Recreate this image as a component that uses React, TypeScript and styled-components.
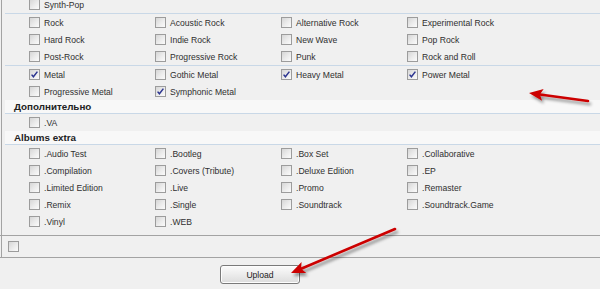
import React from "react";
import styled, { createGlobalStyle } from "styled-components";

const GlobalStyle = createGlobalStyle`
  html, body {
    margin: 0;
    padding: 0;
    background: #f0f0f0;
  }
  body {
    font-family: "Liberation Sans", Arial, sans-serif;
    color: #333;
  }
`;

const Page = styled.div`
  position: relative;
  width: 600px;
  height: 289px;
  overflow: hidden;
  background: #f0f0f0;
`;

const Frame = styled.div`
  margin-left: 1px;
  border-left: 1px solid #a3a3a3;
`;

const Inner = styled.div`
  padding-left: 3px;
`;

const Group = styled.div<{ $first?: boolean; $line?: boolean }>`
  margin-top: ${(p) => (p.$first ? "-4px" : "0")};
  border-bottom: ${(p) => (p.$line ? "1px solid #c9d8e7" : "none")};
`;

const Row = styled.div`
  height: 17px;
  display: grid;
  grid-template-columns: repeat(4, 126px);
  padding-left: 24px;
`;

const Item = styled.label`
  display: flex;
  align-items: center;
  gap: 4px;
  white-space: nowrap;
  font-size: 8.6px;
  color: #2f2f2f;
  padding-top: 1px;
`;

const Box = styled.span`
  flex: none;
  width: 9px;
  height: 9px;
  margin-top: -1px;
  border: 1px solid #9c9c9c;
  background: linear-gradient(135deg, #d6d6d6 0%, #ececec 55%, #fbfbfb 100%);
  display: flex;
  align-items: center;
  justify-content: center;
  svg {
    display: block;
  }
`;

const Header = styled.div`
  height: 13px;
  line-height: 14px;
  padding-left: 9px;
  background: #f8f8f8;
  border-bottom: 1px solid #c9d8e7;
  font-size: 9.8px;
  font-weight: bold;
  color: #222;
`;

const AlbumGroup = styled.div`
  padding-bottom: 5px;
`;

const BottomRow = styled.div`
  height: 21px;
  display: flex;
  align-items: center;
  padding-left: 8px;
  border-top: 1px solid #a3a3a3;
  border-bottom: 1px solid #a3a3a3;
  margin-left: -2px;
`;

const Actions = styled.div`
  display: flex;
  padding: 7px 0 0 220px;
`;

const Button = styled.button`
  width: 80px;
  height: 19px;
  padding: 0;
  border: 1px solid #7a7a7a;
  border-radius: 3px;
  background: linear-gradient(#fbfbfb 0%, #ececec 50%, #dcdcdc 100%);
  box-shadow: inset 0 0 0 1px #fdfdfd;
  font-family: "Liberation Sans", Arial, sans-serif;
  font-size: 8.6px;
  color: #222;
`;

const Overlay = styled.svg`
  position: absolute;
  left: 0;
  top: 0;
  pointer-events: none;
`;

function Check({ on }: { on?: boolean }) {
  return (
    <Box>
      {on && (
        <svg width="9" height="9" viewBox="0 0 9 9">
          <polyline
            points="1.6,4.6 3.4,6.8 7.4,1.6"
            fill="none"
            stroke="#2c3590"
            strokeWidth="1.5"
          />
        </svg>
      )}
    </Box>
  );
}

type Opt = [string, boolean?];

const genreGroups: Opt[][][] = [
  [[["Synth-Pop"]]],
  [
    [["Rock"], ["Acoustic Rock"], ["Alternative Rock"], ["Experimental Rock"]],
    [["Hard Rock"], ["Indie Rock"], ["New Wave"], ["Pop Rock"]],
    [["Post-Rock"], ["Progressive Rock"], ["Punk"], ["Rock and Roll"]],
  ],
  [
    [["Metal", true], ["Gothic Metal"], ["Heavy Metal", true], ["Power Metal", true]],
    [["Progressive Metal"], ["Symphonic Metal", true]],
  ],
];

const albumsExtra: Opt[][] = [
  [[".Audio Test"], [".Bootleg"], [".Box Set"], [".Collaborative"]],
  [[".Compilation"], [".Covers (Tribute)"], [".Deluxe Edition"], [".EP"]],
  [[".Limited Edition"], [".Live"], [".Promo"], [".Remaster"]],
  [[".Remix"], [".Single"], [".Soundtrack"], [".Soundtrack.Game"]],
  [[".Vinyl"], [".WEB"]],
];

function OptRow({ items }: { items: Opt[] }) {
  return (
    <Row>
      {items.map(([label, on]) => (
        <Item key={label}>
          <Check on={on} />
          {label}
        </Item>
      ))}
    </Row>
  );
}

function Arrow({ x1, y1, x2, y2 }: { x1: number; y1: number; x2: number; y2: number }) {
  const dx = x2 - x1;
  const dy = y2 - y1;
  const len = Math.hypot(dx, dy);
  const ux = dx / len;
  const uy = dy / len;
  const hl = 14;
  const hw = 6;
  const bx = x2 - ux * hl;
  const by = y2 - uy * hl;
  const head = `${x2},${y2} ${bx - uy * hw},${by + ux * hw} ${bx + ux * 3},${by + uy * 3} ${bx + uy * hw},${by - ux * hw}`;
  return (
    <g>
      <line x1={x1} y1={y1} x2={bx + ux * 3} y2={by + uy * 3} stroke="#cc0000" strokeWidth="2.6" strokeLinecap="round" />
      <polygon points={head} fill="#cc0000" />
    </g>
  );
}

export default function App() {
  return (
    <Page>
      <GlobalStyle />
      <Frame>
        <Inner>
          {genreGroups.map((rows, i) => (
            <Group key={i} $first={i === 0} $line={i < 2}>
              {rows.map((r, j) => (
                <OptRow key={j} items={r} />
              ))}
            </Group>
          ))}
          <Header>Дополнительно</Header>
          <OptRow items={[[".VA"]]} />
          <Header>Albums extra</Header>
          <AlbumGroup>
            {albumsExtra.map((r, j) => (
              <OptRow key={j} items={r} />
            ))}
          </AlbumGroup>
        </Inner>
        <BottomRow>
          <Check />
        </BottomRow>
      </Frame>
      <Actions>
        <Button>Upload</Button>
      </Actions>
      <Overlay width="600" height="289" viewBox="0 0 600 289">
        <defs>
          <filter id="shadow" x="-20%" y="-50%" width="140%" height="200%">
            <feDropShadow dx="2" dy="3" stdDeviation="1.6" floodColor="#000" floodOpacity="0.4" />
          </filter>
        </defs>
        <g filter="url(#shadow)">
          <Arrow x1={588} y1={101} x2={529} y2={93} />
          <Arrow x1={395} y1={229} x2={291} y2={273} />
        </g>
      </Overlay>
    </Page>
  );
}
